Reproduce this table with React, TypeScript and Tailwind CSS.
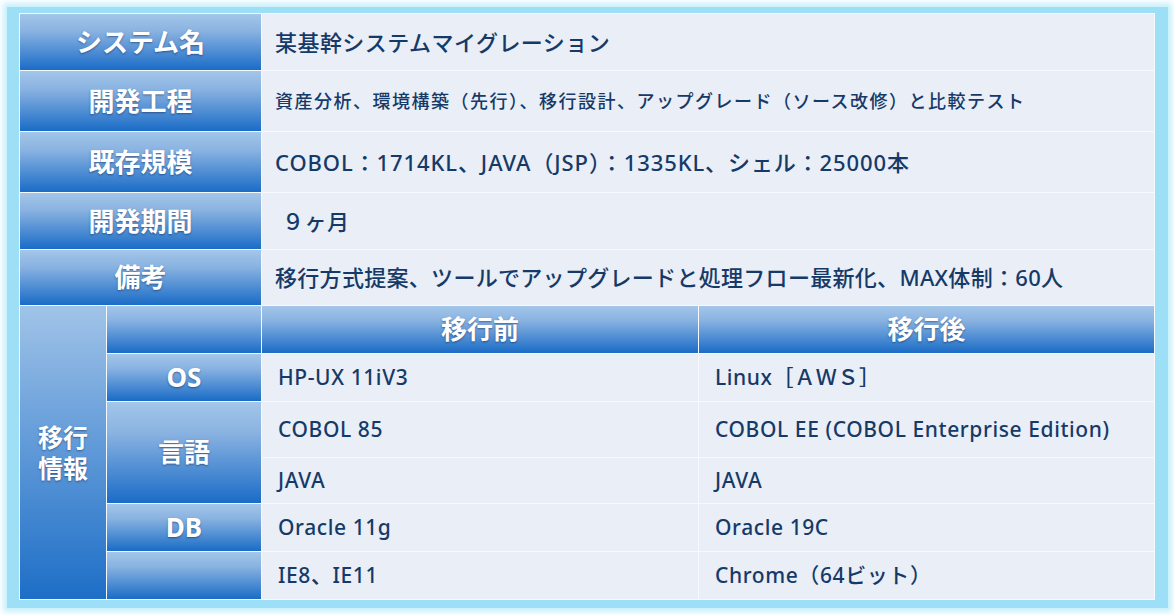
import React from "react";

const H =
  "flex items-center justify-center text-white font-bold text-[26px] bg-[linear-gradient(180deg,#a3c6e9_0%,#8ab3e1_30%,#1a6cc7_100%)] [text-shadow:0_1px_2px_rgba(0,20,60,0.45)]";
const D = "flex items-center bg-[#e9eef7] text-[#163a68] font-medium";
const T = `${D} pl-[13px] text-[22px] tracking-[0.45px]`;
const M = `${D} pl-[16px] text-[21px] tracking-[0.6px]`;

export default function App() {
  return (
    <div className="w-[1174px] h-[615px] bg-white pt-[7px] pl-[7px] font-[family-name:'Noto_Sans','Noto_Sans_CJK_JP',sans-serif]">
      <div className="w-[1161px] bg-[#9ddff6] shadow-[0_0_6px_4px_#c6f0fc] pl-[12px] pr-[13px] pt-[6px] pb-[8px]">
        <div className="grid grid-cols-[86px_154px_436px_455px] grid-rows-[56px_60px_60px_56px_55px_47px_47px_55px_45px_47px_47px] gap-px p-px bg-[#f6f9fd]">
          {/* Top section */}
          <div className={`${H} col-span-2`}>システム名</div>
          <div className={`${T} col-span-2`}>某基幹システムマイグレーション</div>

          <div className={`${H} col-span-2`}>開発工程</div>
          <div className={`${D} col-span-2 pl-[13px] text-[18px] tracking-[1.5px]`}>
            資産分析、環境構築（先行）、移行設計、アップグレード（ソース改修）と比較テスト
          </div>

          <div className={`${H} col-span-2`}>既存規模</div>
          <div className={`${D} col-span-2 pl-[13px] text-[22px] tracking-[0.9px]`}>
            COBOL：1714KL、JAVA（JSP）：1335KL、シェル：25000本
          </div>

          <div className={`${H} col-span-2`}>開発期間</div>
          <div className={`${T} col-span-2 !pl-[20px]`}>９ヶ月</div>

          <div className={`${H} col-span-2`}>備考</div>
          <div className={`${D} col-span-2 pl-[13px] text-[22px] tracking-[0.3px]`}>
            移行方式提案、ツールでアップグレードと処理フロー最新化、MAX体制：60人
          </div>

          {/* Migration section */}
          <div className="row-span-6 flex flex-col items-center justify-center gap-[1px] text-white font-bold text-[25px] bg-[linear-gradient(180deg,#a0c4e8_0%,#78a9de_30%,#1d6ec7_100%)] [text-shadow:0_1px_2px_rgba(0,20,60,0.45)]">
            <span className="leading-[30px]">移行</span>
            <span className="leading-[30px]">情報</span>
          </div>
          <div className={H}></div>
          <div className={H}>移行前</div>
          <div className={H}>移行後</div>

          <div className={H}>OS</div>
          <div className={M}>HP-UX 11iV3</div>
          <div className={M}>Linux［ＡＷＳ］</div>

          <div className={`${H} row-span-2`}>言語</div>
          <div className={M}>COBOL 85</div>
          <div className={M}>COBOL EE (COBOL Enterprise Edition)</div>
          <div className={M}>JAVA</div>
          <div className={M}>JAVA</div>

          <div className={H}>DB</div>
          <div className={M}>Oracle 11g</div>
          <div className={M}>Oracle 19C</div>

          <div className={H}></div>
          <div className={M}>IE8、IE11</div>
          <div className={M}>Chrome（64ビット）</div>
        </div>
      </div>
    </div>
  );
}
